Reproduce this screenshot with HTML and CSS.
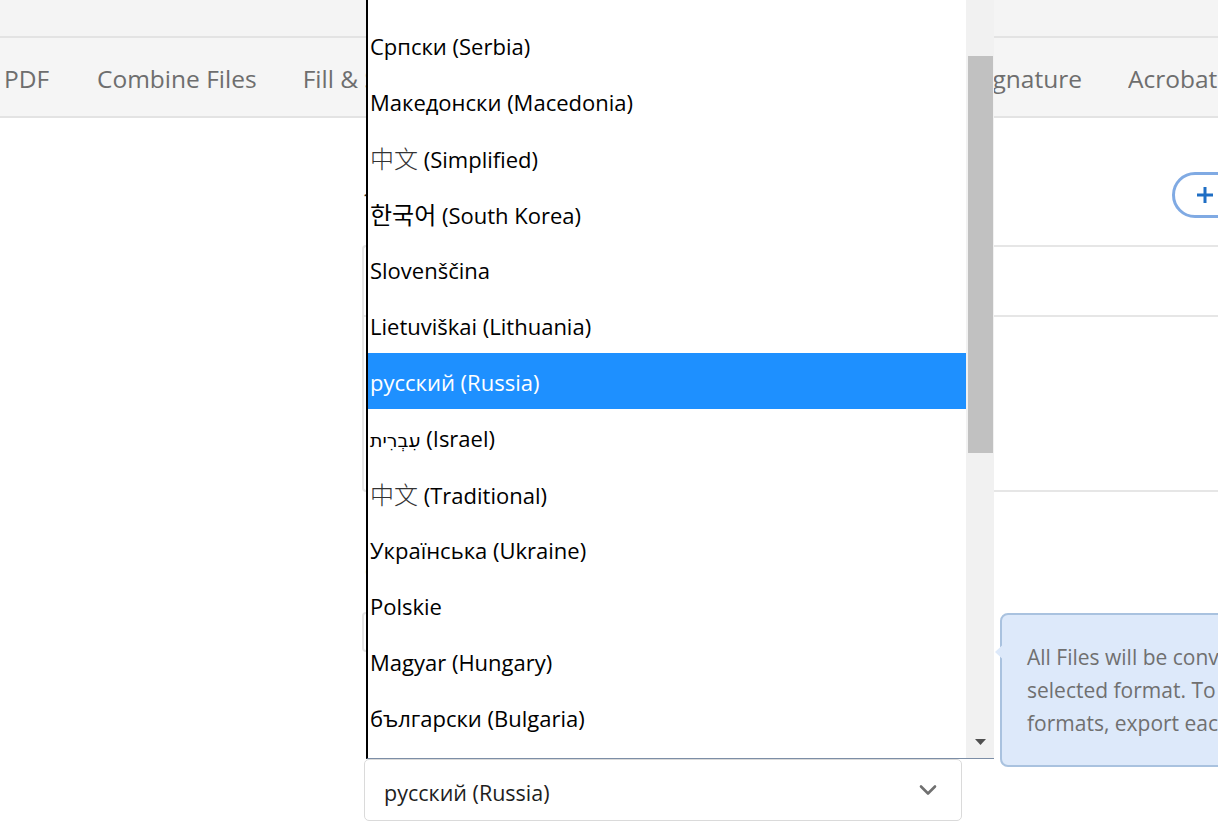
FILE: index.html
```html
<!DOCTYPE html>
<html lang="en">
<head>
<meta charset="utf-8">
<title>Export PDF</title>
<link rel="stylesheet" href="styles.css">
</head>
<body>
<div class="page">
  <div class="topstrip"></div>
  <nav class="tabs">
    <div class="tab tab-first">PDF</div>
    <div class="tab">Combine Files</div>
    <div class="tab">Fill &amp; Sign</div>
    <div class="tab tab-grow">Request Signature</div>
    <div class="tab tab-last">Acrobat Pro</div>
  </nav>
  <main class="main">
    <div class="head">
      <span class="headmark">?</span>
      <button class="pill" type="button">
        <svg class="plus" width="16" height="16" viewBox="0 0 16 16"><path d="M8 1.5v13M1.5 8h13" stroke="#1f6ec4" stroke-width="3" stroke-linecap="square"/></svg>
        <span>Add Files</span>
      </button>
    </div>
    <section class="panel">
      <div class="panel-row"></div>
      <div class="panel-body"></div>
    </section>
    <div class="lower">
      <div class="label">Convert to</div>
      <div class="field"></div>
      <div class="label label2">Document language</div>
      <div class="select">
        <span>русский (Russia)</span>
        <svg class="chev" width="18" height="12" viewBox="0 0 18 12"><path d="M2 2.5l7 7 7-7" fill="none" stroke="#707070" stroke-width="2.6" stroke-linecap="round" stroke-linejoin="round"/></svg>
      </div>
    </div>
  </main>

  <div class="tip">
    <span class="tip-arrow"></span>
    <p>All Files will be converted to the<br>selected format. To convert to other<br>formats, export each file separately.</p>
  </div>

  <div class="popup">
    <ul class="list">
      <li>Српски (Serbia)</li>
      <li>Македонски (Macedonia)</li>
      <li><span class="cjk">中文</span> (Simplified)</li>
      <li><span class="kr">한국어</span> (South Korea)</li>
      <li>Slovenščina</li>
      <li>Lietuviškai (Lithuania)</li>
      <li class="sel">русский (Russia)</li>
      <li><span class="he">עִבְרִית</span> (Israel)</li>
      <li><span class="cjk">中文</span> (Traditional)</li>
      <li>Українська (Ukraine)</li>
      <li>Polskie</li>
      <li>Magyar (Hungary)</li>
      <li>български (Bulgaria)</li>
      <li>Hrvatski (Croatia)</li>
    </ul>
    <div class="scroll">
      <div class="thumb"></div>
      <span class="down"></span>
    </div>
  </div>
</div>
</body>
</html>
```

FILE: styles.css
```css
* { box-sizing: border-box; }
html, body { margin: 0; padding: 0; }
body {
  width: 1218px;
  height: 829px;
  overflow: hidden;
  background: #ffffff;
  font-family: "Open Sans", "Noto Sans", sans-serif;
}
.page { position: relative; width: 1218px; height: 829px; overflow: hidden; }

.topstrip {
  height: 38px;
  background: #f4f4f4;
  border-bottom: 2px solid #e3e3e3;
}
.tabs {
  height: 80px;
  background: #f5f5f5;
  border-bottom: 2px solid #e3e3e3;
  display: flex;
  align-items: center;
  gap: 46px;
  padding-top: 2px;
  padding-left: 4px;
  overflow: hidden;
  color: #6e6e6e;
  font-size: 24.5px;
  white-space: nowrap;
}
.tab { flex: 0 0 auto; }
.tab-first { width: 47px; overflow: hidden; }
.tab-grow { flex: 1 1 auto; text-align: right; overflow: hidden; }
.tab-last { width: 90px; overflow: hidden; }

.main { padding-left: 362px; }
.head {
  height: 127px;
  display: flex;
  align-items: flex-start;
  justify-content: space-between;
}
.headmark {
  margin-top: 72px;
  margin-left: 2px;
  font-size: 22px;
  color: #2c2c2c;
  line-height: 22px;
}
.pill {
  margin-top: 54px;
  margin-right: -90px;
  height: 46px;
  width: 136px;
  border: 3px solid #80aae3;
  border-radius: 23px;
  background: #ffffff;
  display: flex;
  align-items: center;
  gap: 10px;
  padding: 0 0 0 22px;
  font: 600 18px "Open Sans", sans-serif;
  color: #1f6ec4;
}
.plus { flex: 0 0 auto; }

.panel {
  height: 247px;
  border: 2px solid #e6e6e6;
  border-right: none;
  border-radius: 4px 0 0 4px;
}
.panel-row { height: 70px; border-bottom: 2px solid #e6e6e6; }

.lower { padding-top: 66px; }
.label {
  height: 40px;
  padding-left: 3px;
  font-size: 20px;
  color: #5a4636;
}
.field {
  height: 40px;
  margin-top: 14px;
  width: 560px;
  border: 2px solid #e4e4e4;
  border-radius: 4px;
}
.label2 { margin-top: 50px; height: 57px; }

.select {
  width: 598px;
  height: 62px;
  margin-left: 2px;
  border: 1.5px solid #dadada;
  border-radius: 5px;
  display: flex;
  align-items: center;
  justify-content: space-between;
  padding: 4px 24px 0 19px;
  font-size: 21.5px;
  color: #1e1e1e;
}
.chev { flex: 0 0 auto; margin-top: -4px; }

.tip {
  position: absolute;
  left: 1000px;
  top: 613px;
  width: 260px;
  height: 154px;
  background: #dde9fa;
  border: 2px solid #a9c2df;
  border-radius: 8px;
  padding: 26px 0 0 25px;
  color: #707070;
  font-size: 21px;
  line-height: 33px;
  white-space: nowrap;
}
.tip p { margin: 0; }
.tip-arrow {
  position: absolute;
  left: -7px;
  top: 24px;
  width: 14px;
  height: 26px;
  background: #dde9fa;
  clip-path: polygon(0 50%, 100% 0, 100% 100%);
}

.popup {
  position: absolute;
  left: 366px;
  top: 0;
  width: 628px;
  height: 759px;
  background: #ffffff;
  border-left: 2px solid #000000;
  border-bottom: 1px solid #7c8ea6;
  display: flex;
  overflow: hidden;
}
.list {
  list-style: none;
  margin: 0;
  padding: 17px 0 0 0;
  flex: 1 1 auto;
  font-family: "Open Sans", "Noto Sans CJK SC", sans-serif;
  font-size: 22px;
  color: #000000;
}
.list li {
  height: 56px;
  line-height: 58px;
  padding-left: 2px;
  white-space: nowrap;
}
.list li.sel { background: #1e90ff; color: #ffffff; }
.cjk { font-family: "Noto Sans CJK SC", sans-serif; font-weight: 300; font-size: 24px; color: #333; }
.sel .cjk { color: #fff; }
.kr { font-family: "Noto Sans CJK KR", sans-serif; font-size: 24px; }
.he { font-family: "DejaVu Sans", sans-serif; font-size: 19px; }

.scroll {
  position: relative;
  flex: 0 0 28px;
  background: #f1f1f1;
}
.thumb {
  margin: 56px 1px 0 2px;
  height: 397px;
  background: #c1c1c1;
}
.down {
  position: absolute;
  left: 9px;
  top: 739px;
  width: 11px;
  height: 6px;
  background: #505050;
  clip-path: polygon(0 0, 100% 0, 50% 100%);
}
```
